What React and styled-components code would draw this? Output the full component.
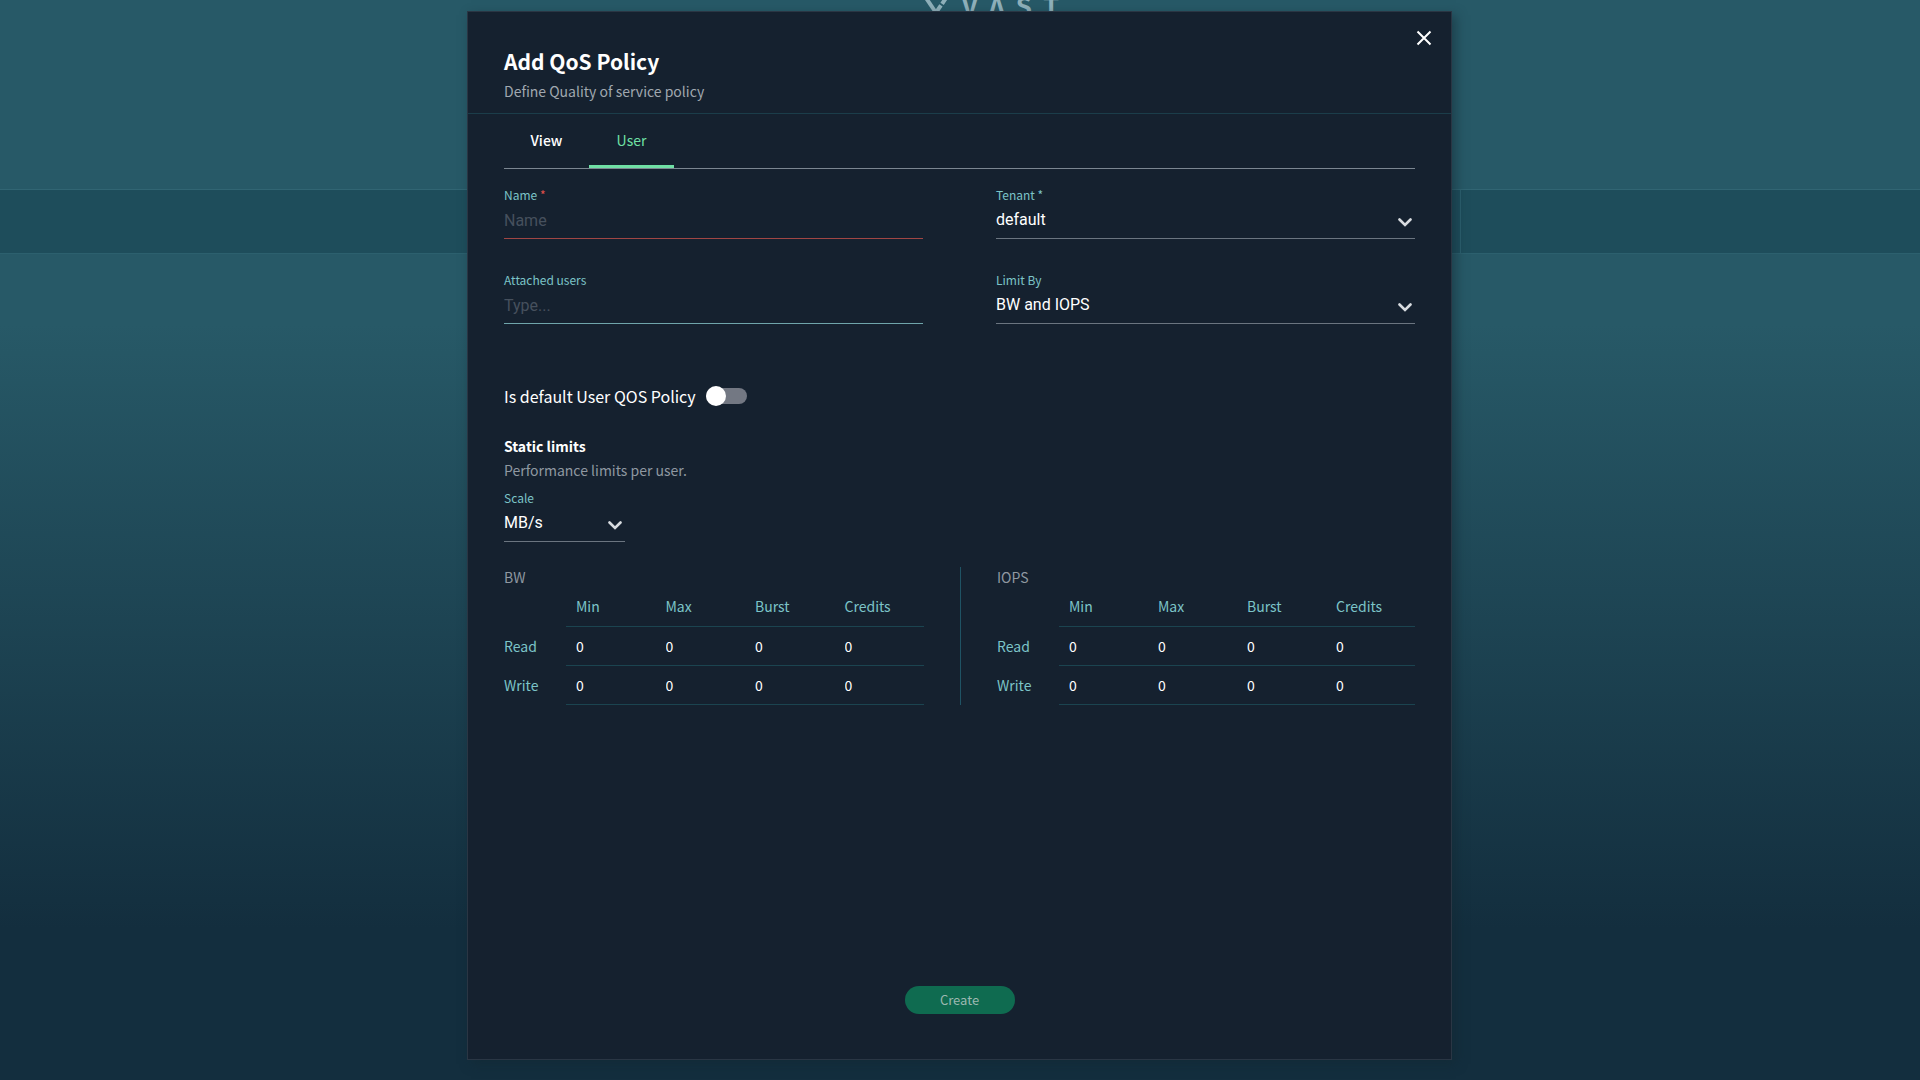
import React, { useState } from "react"
import styled, { createGlobalStyle, css } from "styled-components"

const GlobalStyle = createGlobalStyle`
  * {
    box-sizing: border-box;
  }
  body {
    margin: 0;
    font-family: "Noto Sans CJK SC", "Noto Sans", sans-serif;
    font-size: 14px;
    line-height: 20px;
    color: #ffffff;
    background: #132e3e;
  }
  button, input, select {
    font: inherit;
    color: inherit;
    border: 0;
    padding: 0;
    background: none;
    outline: none;
  }
`

const columns = ["Min", "Max", "Burst", "Credits"]
const rows = ["Read", "Write"]

function SelectField({ id, label, options, required, width }) {
  return (
    <Field $width={width}>
      <Label htmlFor={id}>
        {label}
        {required && " *"}
      </Label>
      <SelectWrap>
        <Select id={id}>
          {options.map((option) => (
            <option key={option}>{option}</option>
          ))}
        </Select>
        <Chevron viewBox="0 0 14 9" aria-hidden="true">
          <path d="M1.5 1.5 7 7l5.500-5.500" />
        </Chevron>
      </SelectWrap>
    </Field>
  )
}

function LimitsTable({ title }) {
  return (
    <section>
      <LimitsTitle>{title}</LimitsTitle>
      <Table>
        <thead>
          <tr>
            <Corner />
            {columns.map((column) => (
              <ColumnHead key={column} scope="col">
                {column}
              </ColumnHead>
            ))}
          </tr>
        </thead>
        <tbody>
          {rows.map((row) => (
            <tr key={row}>
              <RowHead scope="row">{row}</RowHead>
              {columns.map((column) => (
                <Cell key={column}>
                  <NumberInput
                    aria-label={`${title} ${row} ${column}`}
                    defaultValue="0"
                    inputMode="numeric"
                  />
                </Cell>
              ))}
            </tr>
          ))}
        </tbody>
      </Table>
    </section>
  )
}

export default function App() {
  const [tab, setTab] = useState("User")
  const [isDefault, setIsDefault] = useState(false)

  return (
    <Page>
      <GlobalStyle />
      <Backdrop>
        <Masthead>
          <LogoMark viewBox="0 0 26 24" aria-hidden="true">
            <path d="M1-2l9.500 14" />
            <path d="M21-2l-9.500 14" strokeDasharray="7 2" />
          </LogoMark>
          <span>V</span>
          <span>Λ</span>
          <span>S</span>
          <span>T</span>
        </Masthead>
        <NavBand>
          <NavCell />
          <NavCell />
        </NavBand>
      </Backdrop>

      <Modal role="dialog" aria-labelledby="dialog-title">
        <Header>
          <div>
            <Title id="dialog-title">Add QoS Policy</Title>
            <Subtitle>Define Quality of service policy</Subtitle>
          </div>
          <CloseButton type="button" aria-label="Close">
            <svg viewBox="0 0 16 16" width="16" height="16">
              <path d="M1.500 1.500l13 13M14.500 1.500l-13 13" />
            </svg>
          </CloseButton>
        </Header>

        <Body>
          <Tabs role="tablist">
            {["View", "User"].map((name) => (
              <Tab
                key={name}
                type="button"
                role="tab"
                aria-selected={tab === name}
                $active={tab === name}
                onClick={() => setTab(name)}
              >
                {name}
              </Tab>
            ))}
          </Tabs>

          <FieldGrid>
            <Field>
              <Label htmlFor="name">
                Name <Star>*</Star>
              </Label>
              <TextInput id="name" placeholder="Name" $invalid />
            </Field>
            <SelectField id="tenant" label="Tenant" options={["default"]} required />
            <Field>
              <Label htmlFor="users">Attached users</Label>
              <TextInput id="users" placeholder="Type..." />
            </Field>
            <SelectField
              id="limit-by"
              label="Limit By"
              options={["BW and IOPS", "BW", "IOPS"]}
            />
          </FieldGrid>

          <SwitchRow>
            Is default User QOS Policy
            <Switch
              type="checkbox"
              checked={isDefault}
              onChange={(e) => setIsDefault(e.target.checked)}
            />
          </SwitchRow>

          <SectionTitle>Static limits</SectionTitle>
          <SectionText>Performance limits per user.</SectionText>
          <SelectField id="scale" label="Scale" options={["MB/s", "GB/s"]} width="121px" />

          <LimitsRow>
            <LimitsTable title="BW" />
            <Divider />
            <LimitsTable title="IOPS" />
          </LimitsRow>
        </Body>

        <Footer>
          <CreateButton type="submit">Create</CreateButton>
        </Footer>
      </Modal>
    </Page>
  )
}

const Page = styled.main`
  position: relative;
  display: flex;
  justify-content: center;
  align-items: stretch;
  min-height: 100vh;
  padding: 11px 1px 20px 0;
  background: linear-gradient(#275967 0%, #275967 30%, #132e3e 86%);
`

const Backdrop = styled.div`
  position: absolute;
  inset: 0;
  overflow: hidden;
`

const Masthead = styled.div`
  display: flex;
  justify-content: center;
  gap: 11px;
  height: 189px;
  padding-left: 64px;
  font-size: 26px;
  font-weight: 700;
  line-height: 10px;
  color: #8fb0ba;
`

const LogoMark = styled.svg`
  width: 26px;
  height: 24px;
  fill: none;
  stroke: currentColor;
  stroke-width: 4;
`

const NavBand = styled.div`
  display: grid;
  grid-template-columns: 73fr 23fr;
  height: 65px;
  background: #1e4d5b;
  border-top: 1px solid #316573;
  border-bottom: 1px solid #2c606e;
`

const NavCell = styled.div`
  & + & {
    border-left: 1px solid #2c606e;
  }
`

const Modal = styled.section`
  position: relative;
  display: flex;
  flex-direction: column;
  width: 100%;
  max-width: 985px;
  background: #15212f;
  border: 1px solid #2a3644;
  box-shadow: 4px 4px 10px rgba(18, 40, 50, 0.5);
`

const Header = styled.header`
  display: flex;
  justify-content: space-between;
  align-items: flex-start;
  padding: 33px 19px 12px 36px;
  border-bottom: 1px solid #1b3d4a;
`

const Title = styled.h1`
  margin: 0;
  font-size: 21px;
  line-height: 32px;
  font-weight: 700;
`

const Subtitle = styled.p`
  margin: 4px 0 0;
  color: #a0a8b0;
`

const CloseButton = styled.button`
  display: flex;
  margin-top: -15px;
  cursor: pointer;

  path {
    fill: none;
    stroke: #ffffff;
    stroke-width: 2;
  }
`

const Body = styled.div`
  flex: 1;
  padding: 0 36px;
`

const Tabs = styled.div`
  display: flex;
  height: 55px;
  border-bottom: 1px solid #7b8691;
`

const Tab = styled.button`
  width: 85px;
  font-weight: 500;
  cursor: pointer;
  border-bottom: 3px solid transparent;

  ${({ $active }) =>
    $active &&
    css`
      font-weight: 400;
      color: #6fe0a5;
      border-color: #6fe0a5;
    `}
`

const FieldGrid = styled.div`
  display: grid;
  grid-template-columns: 1fr 1fr;
  gap: 31px 73px;
  padding-top: 16px;
`

const Field = styled.div`
  width: ${({ $width }) => $width || "auto"};
`

const Label = styled.label`
  display: block;
  font-size: 12px;
  line-height: 20px;
  color: #7cc4c8;
`

const Star = styled.span`
  color: #e0504a;
`

const control = css`
  display: block;
  width: 100%;
  height: 34px;
  padding-bottom: 3px;
  font-family: Roboto, sans-serif;
  font-size: 16px;
  border-bottom: 1px solid #6b7580;
`

const TextInput = styled.input`
  ${control}
  border-color: ${({ $invalid }) => ($invalid ? "#a04644" : "#6fa5ab")};

  &::placeholder {
    color: #46505d;
    opacity: 1;
  }
`

const SelectWrap = styled.div`
  position: relative;
`

const Select = styled.select`
  ${control}
  appearance: none;

  option {
    background: #15212f;
  }
`

const Chevron = styled.svg`
  position: absolute;
  right: 3px;
  top: 13px;
  width: 14px;
  height: 9px;
  fill: none;
  stroke: #d8dce0;
  stroke-width: 2.6;
  stroke-linecap: round;
  pointer-events: none;
`

const SwitchRow = styled.label`
  display: flex;
  align-items: center;
  gap: 10px;
  width: fit-content;
  margin-top: 60px;
  font-size: 16px;
  line-height: 24px;
`

const Switch = styled.input`
  appearance: none;
  display: flex;
  align-items: center;
  width: 41px;
  height: 16px;
  margin: 0;
  border-radius: 8px;
  background: #737883;
  cursor: pointer;

  &::before {
    content: "";
    width: 20px;
    height: 20px;
    flex: none;
    border-radius: 50%;
    background: #ffffff;
  }

  &:checked {
    justify-content: flex-end;
    background: #0f7a58;
  }
`

const SectionTitle = styled.h2`
  margin: 28px 0 0;
  font-size: 14px;
  line-height: 20px;
  font-weight: 700;
`

const SectionText = styled.p`
  margin: 4px 0 8px;
  color: #8f98a1;
`

const LimitsRow = styled.div`
  display: grid;
  grid-template-columns: 420fr 1px 418fr;
  gap: 36px;
  margin-top: 25px;
`

const Divider = styled.div`
  background: #1f5364;
`

const LimitsTitle = styled.h3`
  margin: 0;
  font-size: 14px;
  line-height: 20px;
  font-weight: 400;
  color: #8f98a1;
`

const Table = styled.table`
  width: 100%;
  table-layout: fixed;
  border-collapse: collapse;
`

const Corner = styled.td`
  width: 62px;
`

const ColumnHead = styled.th`
  height: 39px;
  padding: 0 10px;
  font-weight: 400;
  text-align: left;
  color: #7cc4c8;
  border-bottom: 1px solid #1b4450;
`

const RowHead = styled.th`
  padding: 0;
  font-weight: 400;
  text-align: left;
  color: #7cc4c8;
`

const Cell = styled.td`
  height: 39px;
  padding: 0 10px;
  border-bottom: 1px solid #1b4450;
`

const NumberInput = styled.input`
  display: block;
  width: 100%;
`

const Footer = styled.footer`
  display: flex;
  justify-content: center;
  padding-bottom: 45px;
`

const CreateButton = styled.button`
  width: 110px;
  height: 28px;
  border-radius: 14px;
  background: #0f6b50;
  font-size: 13px;
  color: #9db8b0;
  cursor: pointer;
`
